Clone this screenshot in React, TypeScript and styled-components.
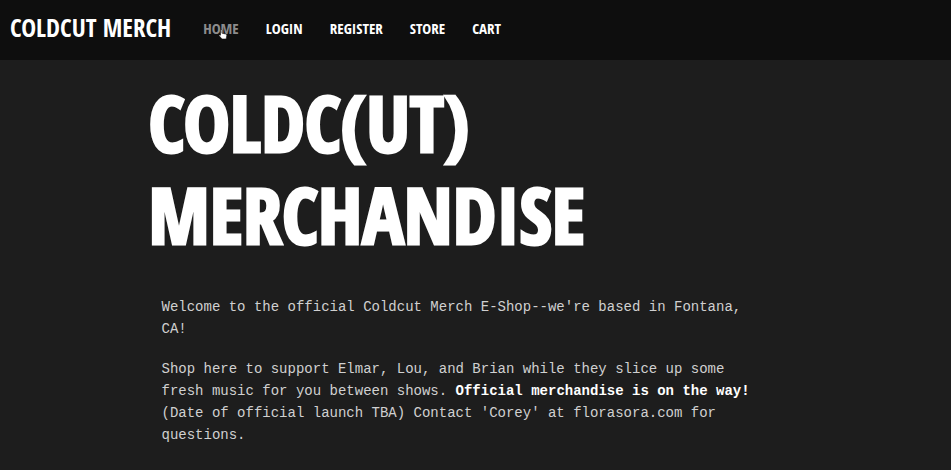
import React from "react";
import styled, { createGlobalStyle } from "styled-components";

const GlobalStyle = createGlobalStyle`
  *, *::before, *::after { box-sizing: border-box; }
  body {
    margin: 0;
    background: #1d1d1d;
    color: #d0d0d0;
    font-family: "Liberation Mono", "Courier New", monospace;
  }
`;

const displayFont = `"Open Sans Condensed", "Roboto Condensed", "Open Sans", sans-serif`;

const Navbar = styled.nav`
  display: flex;
  align-items: center;
  min-height: 60px;
  padding: 0 10px 6px;
  background: #0e0e0e;
  font-family: ${displayFont};
  font-weight: 700;
`;

const Brand = styled.a`
  margin-right: 32px;
  color: #fff;
  font-size: 25px;
  line-height: 40px;
  text-decoration: none;
  white-space: nowrap;
`;

const NavList = styled.ul`
  display: flex;
  gap: 27px;
  margin: 0;
  padding: 2px 0 0;
  list-style: none;
`;

const NavItem = styled.li`
  position: relative;
`;

const NavLink = styled.a<{ $active?: boolean }>`
  color: ${(p) => (p.$active ? "#8c8c8c" : "#fff")};
  font-size: 15px;
  line-height: 24px;
  text-decoration: none;
`;

const Pointer = styled.svg`
  position: absolute;
  left: 15px;
  top: 13px;
  pointer-events: none;
`;

const Main = styled.main`
  max-width: 654px;
  margin: 0 auto;
  padding: 16px 0 12px;
`;

const Title = styled.h1`
  margin: 0;
  color: #fff;
  font-family: ${displayFont};
  font-size: 78px;
  font-weight: 700;
  line-height: 92px;
  -webkit-text-stroke: 3px #fff;
`;

const Intro = styled.section`
  max-width: 630px;
  padding: 36px 13px 0;
`;

const Paragraph = styled.p`
  margin: 0 0 18px;
  font-size: 14px;
  line-height: 22px;
`;

const Strong = styled.strong`
  color: #fff;
  font-weight: 700;
`;

const links = ["HOME", "LOGIN", "REGISTER", "STORE", "CART"];

export default function App() {
  return (
    <>
      <GlobalStyle />
      <Navbar>
        <Brand href="#">COLDCUT MERCH</Brand>
        <NavList>
          {links.map((label) => (
            <NavItem key={label}>
              <NavLink href={`#${label.toLowerCase()}`} $active={label === "HOME"}>
                {label}
              </NavLink>
              {label === "HOME" && (
                <Pointer width="10" height="11" viewBox="0 0 10 11" aria-hidden="true">
                  <path
                    d="M2.5 1.2c0-.9 1.4-.9 1.4 0v3l3.8.8c.8.2 1.1.6 1.1 1.3L8.2 10H4L1.2 6.8c-.5-.7.3-1.3 1.3-.6z"
                    fill="#fff"
                    stroke="#111"
                    strokeWidth="0.6"
                  />
                </Pointer>
              )}
            </NavItem>
          ))}
        </NavList>
      </Navbar>
      <Main>
        <Title>
          COLDC(UT)
          <br />
          MERCHANDISE
        </Title>
        <Intro>
          <Paragraph>
            Welcome to the official Coldcut Merch E-Shop--we're based in Fontana, CA!
          </Paragraph>
          <Paragraph>
            Shop here to support Elmar, Lou, and Brian while they slice up some fresh music for you
            between shows. <Strong>Official merchandise is on the way!</Strong> (Date of official
            launch TBA) Contact 'Corey' at florasora.com for questions.
          </Paragraph>
        </Intro>
      </Main>
    </>
  );
}
